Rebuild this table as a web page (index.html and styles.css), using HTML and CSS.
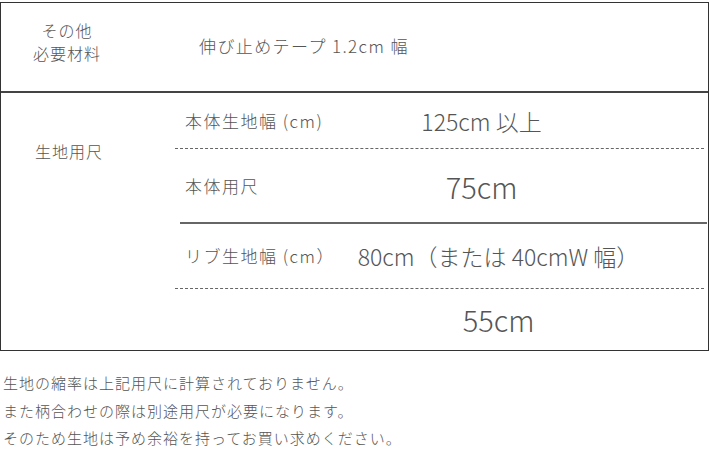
FILE: index.html
```html
<!DOCTYPE html>
<html lang="ja">
<head>
<meta charset="utf-8">
<title>生地用尺</title>
<link rel="stylesheet" href="styles.css">
</head>
<body>
<div class="spec">
  <div class="row row-material">
    <div class="head">その他<br>必要材料</div>
    <div class="body body-material">伸び止めテープ 1.2cm 幅</div>
  </div>
  <div class="row row-yardage">
    <div class="head head-top">生地用尺</div>
    <div class="body body-yardage">
      <div class="item item-1 dashed">
        <span class="label">本体生地幅 (cm)</span>
        <span class="value value-mid main">125cm 以上</span>
      </div>
      <div class="item item-2">
        <span class="label">本体用尺</span>
        <span class="value value-big main">75cm</span>
      </div>
      <div class="rule"></div>
      <div class="item item-3 dashed">
        <span class="label">リブ生地幅 (cm）</span>
        <span class="value value-mid rib">80cm（または 40cmW 幅）</span>
      </div>
      <div class="item item-4">
        <span class="label"></span>
        <span class="value value-big rib">55cm</span>
      </div>
    </div>
  </div>
</div>
<div class="notes">
  <p>生地の縮率は上記用尺に計算されておりません。</p>
  <p>また柄合わせの際は別途用尺が必要になります。</p>
  <p>そのため生地は予め余裕を持ってお買い求めください。</p>
</div>
</body>
</html>
```
FILE: styles.css
```css
html, body {
  margin: 0;
  padding: 0;
  background: #fff;
}
body {
  font-family: "Noto Sans CJK JP", sans-serif;
  font-weight: 300;
  color: #555;
}
.spec {
  margin-top: 2px;
  width: 709px;
  box-sizing: border-box;
  border: 1px solid #333;
}
.row {
  display: flex;
}
.row-material {
  height: 88px;
  align-items: center;
}
.row-yardage {
  border-top: 2px solid #444;
  height: 257px;
  align-items: flex-start;
}
.head {
  width: 132px;
  flex: none;
  text-align: center;
  font-size: 16px;
  letter-spacing: 1px;
  line-height: 23px;
  padding-bottom: 10px;
}
.head-top {
  padding-top: 47px;
  padding-bottom: 0;
  width: 136px;
}
.body-material {
  padding-left: 66px;
  font-size: 17px;
  letter-spacing: 1.4px;
  line-height: 24px;
  padding-bottom: 2px;
}
.body-yardage {
  flex: 1;
  margin-left: 38px;
  margin-right: 4px;
  display: flex;
  flex-direction: column;
}
.item {
  display: flex;
  align-items: center;
  padding-left: 10px;
}
.item-1 { height: 55px; }
.item-2 { height: 73px; }
.item-3 { height: 64px; }
.item-4 { height: 60px; }
.dashed {
  border-bottom: 1px dashed #666;
}
.rule {
  height: 2px;
  background: #666;
  margin: 0 -3px 0 5px;
}
.label {
  width: 170px;
  flex: none;
  font-size: 17px;
  letter-spacing: 1.5px;
  line-height: 24px;
}
.value {
  flex: 1;
  text-align: center;
  white-space: nowrap;
}
.value-mid {
  font-size: 23px;
  line-height: 28px;
}
.value-big {
  font-size: 29px;
  line-height: 34px;
}
.main {
  padding-right: 96px;
}
.rib {
  padding-right: 62px;
}
.notes {
  margin-top: 18px;
  padding-left: 3px;
  font-size: 15px;
  letter-spacing: 1px;
}
.notes p {
  margin: 0;
  line-height: 27.5px;
}
```
